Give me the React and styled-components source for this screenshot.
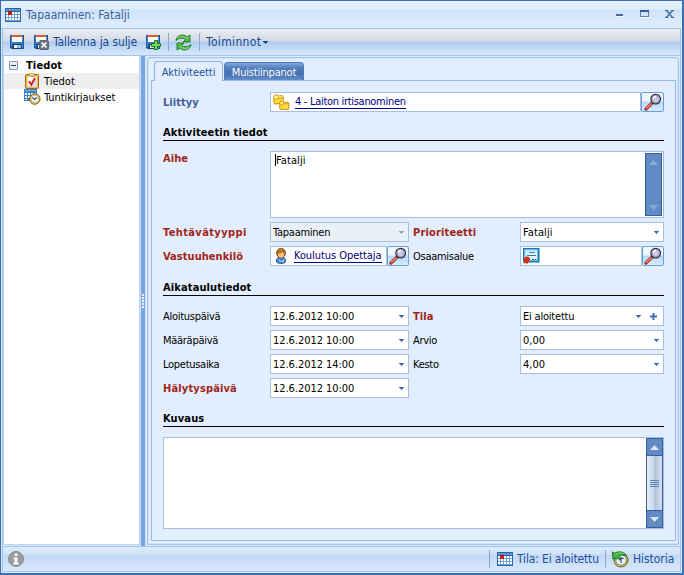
import styled, { createGlobalStyle, css } from "styled-components";

export default function App() {
  return (
    <>
      <GlobalStyle />
      <Window>
        <TitleBar>
          <CalendarIcon />
          <Title>Tapaaminen: Fatalji</Title>
          <WindowButtons />
        </TitleBar>
        <Frame>
          <Toolbar>
            <ToolItem $w={24}><SaveIcon /></ToolItem>
            <ToolItem $w={112} $gap={4}>
              <SaveIcon badge="close" />
              <Fit $ls={-0.1}>Tallenna ja sulje</Fit>
            </ToolItem>
            <ToolItem $w={23}><SaveIcon badge="plus" /></ToolItem>
            <Divider $m="0 6px 0 0" />
            <ToolItem $w={24}><RefreshIcon /></ToolItem>
            <Divider $m="0 6px 0 0" />
            <Fit $ls={0.35}>Toiminnot</Fit>
            <MenuArrow $dark />
          </Toolbar>
          <Main>
            <Sidebar>
              <TreeRow $root>
                <Toggle />
                <Strong>Tiedot</Strong>
              </TreeRow>
              <TreeRow $selected>
                <ClipboardIcon />
                <Fit>Tiedot</Fit>
              </TreeRow>
              <TreeRow>
                <TimesheetIcon />
                <Fit $ls={-0.05}>Tuntikirjaukset</Fit>
              </TreeRow>
            </Sidebar>
            <Splitter>
              {[0, 1, 2, 3, 4].map((i) => <Grip key={i} />)}
            </Splitter>
            <Content>
              <Tabs>
                <Tab $active $w={69}>Aktiviteetti</Tab>
                <Tab $w={80} $ls={-0.2}>Muistiinpanot</Tab>
              </Tabs>
              <Panel>
                <ActivityForm />
              </Panel>
            </Content>
          </Main>
          <StatusBar>
            <InfoIcon />
            <Spacer />
            <Divider $m="0 7px 0 0" />
            <StatusItem $w={108}>
              <CalendarIcon />
              <Fit $ls={-0.15}>Tila: Ei aloitettu</Fit>
            </StatusItem>
            <Divider $m="0 6px 0 0" />
            <StatusItem $w={68}>
              <HistoryIcon />
              <Fit $ls={-0.05}>Historia</Fit>
            </StatusItem>
          </StatusBar>
        </Frame>
      </Window>
    </>
  );
}

function ActivityForm() {
  return (
    <>
      <Row>
        <Label $tone="blue">Liittyy</Label>
        <Lookup>
          <Box>
            <FoldersIcon />
            <RecordLink $gap={5} $ls={-0.3}>4 - Laiton irtisanominen</RecordLink>
          </Box>
          <SearchButton width={23} />
        </Lookup>
      </Row>
      <Heading $h={29}>Aktiviteetin tiedot</Heading>
      <Row $h={67} $top={10}>
        <Label $tone="red" $align="start">Aihe</Label>
        <TextArea>
          <Subject>Fatalji</Subject>
          <ScrollBar $disabled>
            <ScrollArrow up />
            <ScrollArrow />
          </ScrollBar>
        </TextArea>
      </Row>
      <SplitRow $top={4}>
        <Label $tone="red" $ls={0.38}>Tehtävätyyppi</Label>
        <Select value="Tapaaminen" spacing={-0.25} disabled />
        <Label $tone="red" $ls={0.15}>Prioriteetti</Label>
        <Select value="Fatalji" spacing={0.1} />
      </SplitRow>
      <SplitRow $top={4}>
        <Label $tone="red">Vastuuhenkilö</Label>
        <Lookup>
          <Box>
            <PersonIcon />
            <RecordLink $gap={5} $ls={-0.06}>Koulutus Opettaja</RecordLink>
          </Box>
          <SearchButton />
        </Lookup>
        <Label>Osaamisalue</Label>
        <Lookup>
          <Box><CertificateIcon /></Box>
          <SearchButton />
        </Lookup>
      </SplitRow>
      <Heading $h={30}>Aikataulutiedot</Heading>
      <SplitRow $top={10}>
        <Label>Aloituspäivä</Label>
        <Select value="12.6.2012 10:00" spacing={-0.05} />
        <Label $tone="red">Tila</Label>
        <Select value="Ei aloitettu" spacing={-0.2} addable />
      </SplitRow>
      <SplitRow $top={4}>
        <Label>Määräpäivä</Label>
        <Select value="12.6.2012 10:00" spacing={-0.05} />
        <Label>Arvio</Label>
        <Select value="0,00" />
      </SplitRow>
      <SplitRow $top={4}>
        <Label>Lopetusaika</Label>
        <Select value="12.6.2012 14:00" spacing={-0.05} />
        <Label>Kesto</Label>
        <Select value="4,00" />
      </SplitRow>
      <SplitRow $top={4}>
        <Label $tone="red" $ls={0.15}>Hälytyspäivä</Label>
        <Select value="12.6.2012 10:00" spacing={-0.05} />
      </SplitRow>
      <Heading $h={29}>Kuvaus</Heading>
      <Description>
        <ScrollBar>
          <ScrollArrow up />
          <Thumb>
            <i /><i /><i /><i />
          </Thumb>
          <ScrollArrow />
        </ScrollBar>
      </Description>
    </>
  );
}

function Select({ value, disabled, spacing, addable }) {
  return (
    <Box $disabled={disabled}>
      <FieldText $ls={spacing}>{value}</FieldText>
      <Spacer />
      <MenuArrow $disabled={disabled} />
      {addable && (
        <PlusMark viewBox="0 0 7 7" width="7" height="7">
          <path d="M2.5 0h2v2.5H7v2H4.5V7h-2V4.5H0v-2h2.5z" fill="#3f72b8" />
        </PlusMark>
      )}
    </Box>
  );
}

function MenuArrow({ $dark, $disabled }) {
  const fill = $disabled ? "#9babc3" : $dark ? "#1e4790" : "#3f72b8";
  return (
    <ArrowMark $dark={$dark} width="5" height="3" viewBox="0 0 5 3" shapeRendering="crispEdges">
      <path d="M0 0h5v1H4v1H3v1H2V2H1V1H0z" fill={fill} />
    </ArrowMark>
  );
}

function ScrollArrow({ up }) {
  return (
    <ArrowCell>
      <svg width="9" height="5" viewBox="0 0 9 5">
        <path d={up ? "M4.5 0L9 5H0z" : "M0 0h9L4.5 5z"} fill="currentColor" />
      </svg>
    </ArrowCell>
  );
}

function SearchButton({ width = 22 }) {
  return (
    <IconButton type="button" $w={width}>
      <svg width="18" height="18" viewBox="0 0 18 18">
        <path d="M2 16L8.2 9.8" stroke="#9b3433" strokeWidth="3.2" strokeLinecap="round" />
        <path d="M2.2 15.6L7.8 10" stroke="#ff7c62" strokeWidth="1.7" />
        <path d="M7.5 10.5l1.6-1.6" stroke="#4b4656" strokeWidth="2" />
        <circle cx="11.7" cy="6.1" r="4.8" fill="#c9c9e6" stroke="#34303d" strokeWidth="1.3" />
        <circle cx="11.7" cy="6.1" r="3.7" fill="none" stroke="#9593b7" />
        <path d="M9.2 5.7c.3-1.5 1.3-2.3 2.8-2.3" stroke="#fff" strokeWidth="1.5" fill="none" />
      </svg>
    </IconButton>
  );
}

function WindowButtons() {
  return (
    <svg viewBox="0 0 60 12" width="60" height="12">
      <g shapeRendering="crispEdges">
        <path d="M0 7h7v1H0zM24 8h10v1H24z" fill="#fff" opacity=".8" />
        <path d="M0 5h7v2H0z" fill="#456b9f" />
        <path d="M24 1h9v7h-9zM25 3v4h7V3z" fill="#5d7fae" fillRule="evenodd" />
        <path d="M24 1h9v2h-9z" fill="#345b93" />
      </g>
      <path d="M50.500 8.500l6-7M50.500 1.500l6 7" stroke="#567aaa" strokeWidth="1.900" />
      <path d="M49 1.500h3M55 1.500h3M49 8.500h3M55 8.500h3" stroke="#456b9f" />
    </svg>
  );
}

function CalendarIcon() {
  return (
    <svg width="16" height="16" viewBox="0 0 16 16" shapeRendering="crispEdges">
      <path d="M0 1h16v14H0z" fill="#2866a8" />
      <path d="M1 2h14v2H1z" fill="#5795d0" />
      <path d="M1 5h14v9H1z" fill="#6fa4d6" />
      {[5, 8, 11].map((y) =>
        [1, 4, 7, 10, 13].map((x) => (
          <rect key={`${x}-${y}`} x={x} y={y} width="2" height="2" fill="#fff" />
        ))
      )}
      <path d="M3 4h4v4H3z" fill="#d51808" />
      <path d="M3 4h4v1H3z" fill="#a51208" />
    </svg>
  );
}

function SaveIcon({ badge }) {
  return (
    <svg width="16" height="16" viewBox="0 0 16 16">
      <g shapeRendering="crispEdges">
        <path d="M1 1h14v14H2v-1H1z" fill="#1f559c" />
        <path d="M2 2h1v11H2zM13 2h1v12h-1z" fill="#4384c8" />
        <path d="M3 1h10v2H3z" fill="#e0592f" />
        <path d="M3 3h10v5H3z" fill="#f7fafd" />
        <path d="M3 8h10v2H3z" fill="#3b7dc4" />
        <path d="M4 10h8v5H4z" fill="#173c70" />
        <path d="M5 11h3v3H5z" fill="#eef4fa" />
        <path d="M8 11h4v3H8z" fill="#9cb8d8" />
      </g>
      {badge === "close" && (
        <>
          <rect x="6.500" y="6.500" width="9" height="9" rx="1.500" fill="#69727e" stroke="#5b6470" />
          <path d="M8.500 8.500l5 5m0-5l-5 5" stroke="#fff" strokeWidth="1.700" />
        </>
      )}
      {badge === "plus" && (
        <path d="M9.500 6.500h3v3h3v3h-3v3h-3v-3h-3v-3h3z" fill="#76d45b" stroke="#187b1b" />
      )}
    </svg>
  );
}

function RefreshIcon() {
  return (
    <svg width="17" height="17" viewBox="0 0 17 17">
      <g fill="#52b84d" stroke="#187923" strokeWidth=".9" strokeLinejoin="round">
        <path d="M1 6.500C2 1 8-.5 12 3l3-2v7H8l2.500-2.500C8 4 4.500 3.500 1 6.500z" />
        <path d="M16 10.500C15 16 9 17.500 5 14l-3 2V9h7l-2.500 2.500c2.500 1.500 6 2 9.500-1z" />
      </g>
      <path d="M3.500 3.800C6 1.800 9 2.200 11.800 4.400L14 2.700M13.500 13.500c-2.500 1.600-5.200 1.300-8.200-1" stroke="#a4e47c" fill="none" />
    </svg>
  );
}

function ClipboardIcon() {
  return (
    <svg width="16" height="16" viewBox="0 0 16 16">
      <rect x="1.500" y="1.500" width="13" height="14" rx="1" fill="#f0b53c" stroke="#a8691a" />
      <path d="M3.500 3.500h9v10.500h-9z" fill="#fff" />
      <path d="M3.500 14l9-9v9z" fill="#d5def2" />
      <path d="M5 1h1.500L8 0l1.500 1H11v2H5z" fill="#f8e69b" stroke="#9a6a22" strokeWidth=".7" />
      <path d="M5 8.300l2.300 3.400L11 5" fill="none" stroke="#d9201c" strokeWidth="2" />
    </svg>
  );
}

function TimesheetIcon() {
  return (
    <svg width="17" height="16" viewBox="0 0 17 16">
      <path d="M0 0h13v12H0z" fill="#3983ca" />
      <path d="M1 1h11v1H1z" fill="#79b1e4" />
      <path d="M1 4h2v2H1zM4 4h2v2H4zM7 4h2v2H7zM10 4h2v2h-2zM1 7h2v2H1zM4 7h2v2H4zM1 10h2v1H1z" fill="#fff" />
      <circle cx="10.800" cy="10" r="5.300" fill="#e9bf55" stroke="#765b20" strokeWidth=".9" />
      <circle cx="10.800" cy="10" r="3.800" fill="#f1f6fa" stroke="#b99b54" strokeWidth=".6" />
      <path d="M8.300 8.500l2.500 2L13 8.500" fill="none" stroke="#355479" strokeWidth="1.200" />
    </svg>
  );
}

function FoldersIcon() {
  return (
    <svg width="17" height="16" viewBox="0 0 17 16">
      <g fill="#ffe66b" stroke="#d49b16">
        <path d="M.5 3.500l.5-2 3-1 1 1.500 4-.5 1 1v6.500l-8 1z" />
        <path d="M1.500 10l-1-4 3-.5.500-1 6.500-.5-.5 5z" fill="#ffdc43" />
        <path d="M6.500 9l1-1.500h2.500l1 1 4-.500.500 1v6l-8 .500z" />
        <path d="M7 15.500l-.5-4 2.500-.5.500-1 6.500-.500-.5 6z" fill="#ffdb3d" />
      </g>
      <path d="M2 3h2M8 9h2" stroke="#fff7b9" />
    </svg>
  );
}

function PersonIcon() {
  return (
    <svg width="16" height="16" viewBox="0 0 16 16">
      <path d="M3.500 14V12c0-2 2-3 4.500-3s4.500 1 4.500 3v2c-2 2-7 2-9 0z" fill="#3f7fcb" stroke="#244e93" strokeWidth=".8" />
      <path d="M4.500 10.500l4 2.500 3-2-1 3-4-.5z" fill="#b8dbf5" />
      <ellipse cx="8" cy="5" rx="4.500" ry="4.700" fill="#b66b17" stroke="#74410f" strokeWidth=".8" />
      <path d="M5 5.500c2 0 3.500-.6 4.500-1.800.4 1 1 1.500 1.700 1.800 0 3-1.200 4.200-3.200 4.200S5 8.500 5 5.500z" fill="#f7c47d" />
      <path d="M6 2.500c1-1 2-1.300 3-1" stroke="#e4a84c" fill="none" />
    </svg>
  );
}

function CertificateIcon() {
  return (
    <svg width="17" height="16" viewBox="0 0 17 16">
      <path d="M.75.750h15v13H.75z" fill="#dff4ff" stroke="#1977b6" strokeWidth="1.500" />
      <path d="M2 2h12.500v10.500H2z" fill="none" stroke="#68c8ec" />
      <path d="M6 4.500h6M4 7.500h9" stroke="#397cac" />
      <path d="M9 11.500h2M12 11.500h1.500" stroke="#2a4a68" />
      <circle cx="4" cy="11.500" r="3" fill="#d53112" />
      <path d="M1.500 13.500L1 15.500l2-.5 1.500 1 .5-2z" fill="#e01d10" />
    </svg>
  );
}

function HistoryIcon() {
  return (
    <svg width="17" height="17" viewBox="0 0 17 17">
      <circle cx="9" cy="9" r="7" fill="#e8bd42" stroke="#6d5723" />
      <circle cx="9" cy="9" r="5.200" fill="#edf7fb" stroke="#718d9e" />
      <path d="M7 9l3-2 1.500 1M9 8v4" stroke="#294e6e" fill="none" strokeWidth="1.200" />
      <path d="M.5.800l2.200 1.400C6.500-.2 12 .2 15 5c-3-1.500-5.500-1.300-7.500.2L9 7.500.8 8z" fill="#42b13d" stroke="#14641d" strokeWidth=".8" />
      <path d="M3 4c3-2.300 6-2.500 8.500-1.600" stroke="#8ada65" fill="none" />
    </svg>
  );
}

function InfoIcon() {
  return (
    <svg width="16" height="16" viewBox="0 0 16 16">
      <circle cx="8" cy="8" r="7.500" fill="#9b9b9b" stroke="#8c8c8c" />
      <path d="M6.500 2.500h3v2.500h-3zM5.500 6.500h4v5.500h1.500v1.500H5V12h1.500V8h-1z" fill="#fff" />
    </svg>
  );
}

const GlobalStyle = createGlobalStyle`
  * { box-sizing: border-box; }
  body {
    margin: 0;
    overflow: hidden;
    font: 11px/14px "DejaVu Sans Condensed", "DejaVu Sans", sans-serif;
    font-stretch: condensed;
    color: #000;
  }
  svg { flex: none; display: block; }
`;

const Window = styled.div`
  width: 684px;
  height: 575px;
  border: 1px solid #3c6fb1;
  border-right-width: 2px;
  border-bottom-width: 2px;
  background: #deebfb;
  display: flex;
  flex-direction: column;
  overflow: hidden;
`;

const TitleBar = styled.header`
  height: 27px;
  flex: none;
  display: flex;
  align-items: center;
  padding: 0 6px 0 4px;
  gap: 5px;
  background: linear-gradient(#e6f1fd 0, #e1eefd 8px, #cfe2f9 9px, #dfeefe 100%);
`;

const Title = styled.h1`
  flex: 1;
  margin: 0;
  font-size: 12px;
  font-weight: 400;
  letter-spacing: 0;
  color: #3d6395;
`;

const Frame = styled.div`
  flex: 1;
  min-height: 0;
  margin: 0 1px 1px;
  border: 1px solid #9fc3f0;
  display: flex;
  flex-direction: column;
`;

const Toolbar = styled.div`
  height: 26px;
  flex: none;
  display: flex;
  align-items: center;
  padding-left: 6px;
  color: #1e4790;
  font-size: 12px;
  background: linear-gradient(#eceff4 0, #d2d9e5 12px, #b0cef0 13px, #d7e7fa 100%);
`;

const ToolItem = styled.div`
  width: ${(p) => p.$w}px;
  flex: none;
  display: flex;
  align-items: center;
  gap: ${(p) => p.$gap || 0}px;
  white-space: nowrap;
`;

const Divider = styled.span`
  width: 1px;
  height: 18px;
  margin: ${(p) => p.$m};
  background: #86a9d5;
`;

const Fit = styled.span`
  white-space: nowrap;
  letter-spacing: ${(p) => p.$ls || 0}px;
`;

const FieldText = styled(Fit)`
  padding-top: 1px;
`;

const Strong = styled.b`
  font-size: 11px;
  letter-spacing: 0.12px;
`;

const ArrowMark = styled.svg`
  margin-left: ${(p) => (p.$dark ? 2 : 0)}px;
`;

const Main = styled.div`
  height: 491px;
  flex: none;
  display: flex;
  border-top: 1px solid #9fc3f0;
  background: #deebfb;
`;

const Sidebar = styled.nav`
  width: 137px;
  margin-bottom: 1px;
  border: 1px solid #b9d2f2;
  border-top: 0;
  background: #fff;
`;

const TreeRow = styled.div`
  height: 16px;
  margin-top: ${(p) => (p.$root ? 1 : 0)}px;
  display: flex;
  align-items: center;
  gap: ${(p) => (p.$root ? 8 : 4)}px;
  padding-left: ${(p) => (p.$root ? 5 : 20)}px;
  background: ${(p) => (p.$selected ? "#efefef" : "none")};
  > :last-child {
    margin-top: 1px;
    margin-left: ${(p) => (p.$root || p.$selected ? 0 : -1)}px;
  }
`;

const Toggle = styled.span`
  width: 9px;
  height: 9px;
  border: 1px solid #8496ae;
  border-radius: 1px;
  background: linear-gradient(#34465b, #34465b) center / 5px 1px no-repeat, #e8eef4;
`;

const Splitter = styled.div`
  width: 6px;
  display: flex;
  flex-direction: column;
  align-items: center;
  justify-content: center;
  gap: 1px;
  border: solid #cfe1f8;
  border-width: 0 1px;
  background: #7ba5dc;
`;

const Grip = styled.i`
  width: 2px;
  height: 2px;
  background: #eef5ff;
`;

const Content = styled.section`
  flex: 1;
  display: flex;
  flex-direction: column;
  margin: 1px;
  padding: 3px 2px 3px 3px;
  border: 1px solid #a3c4ee;
  border-radius: 3px 3px 0 0;
  background: #e2edfd;
  box-shadow: inset 0 0 0 1px #d0e2fa;
`;

const Tabs = styled.div`
  height: 19px;
  flex: none;
  display: flex;
  gap: 1px;
  padding-left: 3px;
`;

const Tab = styled.div`
  width: ${(p) => p.$w}px;
  height: 20px;
  padding-top: 4px;
  z-index: 1;
  text-align: center;
  white-space: nowrap;
  letter-spacing: ${(p) => p.$ls || -0.05}px;
  border: 1px solid #8db2e3;
  border-bottom: 0;
  border-radius: 4px 4px 0 0;
  color: #2053a0;
  background: #e2edfd;
  ${(p) =>
    !p.$active &&
    css`
      height: 18px;
      margin-top: 1px;
      padding-top: 3px;
      color: #fff;
      border-color: #4b79bc;
      background: linear-gradient(#82a9dc 0, #527fbe 5px, #456fae 11px, #648fcb 100%);
    `}
`;

const Panel = styled.div`
  flex: 1;
  padding: 11px 11px 0;
  border: 1px solid #94b9e9;
  background: #e2edfd;
`;

const Row = styled.div`
  height: ${(p) => p.$h || 20}px;
  margin-top: ${(p) => p.$top || 0}px;
  display: grid;
  grid-template-columns: 107px 394px;
`;

const SplitRow = styled(Row)`
  grid-template-columns: 107px 139px 111px 144px;
  > :nth-child(3) { padding-left: 4px; }
`;

const tones = { red: "#a12517", blue: "#435e93" };

const Label = styled.label`
  align-self: ${(p) => p.$align || "center"};
  padding-top: 1px;
  white-space: nowrap;
  color: ${(p) => tones[p.$tone] || "#000"};
  font-weight: ${(p) => (p.$tone ? 700 : 400)};
  letter-spacing: ${(p) => p.$ls ?? (p.$tone ? 0.05 : -0.28)}px;
`;

const Heading = styled.h2`
  height: ${(p) => p.$h}px;
  margin: 0;
  display: flex;
  align-items: flex-end;
  border-bottom: 1px solid #000;
  font-size: 11px;
  font-weight: 700;
  letter-spacing: 0.12px;
`;

const Lookup = styled.div`
  display: flex;
  height: 20px;
  min-width: 0;
`;

const Box = styled.div`
  flex: 1;
  height: 20px;
  min-width: 0;
  display: flex;
  align-items: center;
  padding: 0 4px 0 2px;
  border: 1px solid #a6bfde;
  background: ${(p) => (p.$disabled ? "#eaf0f9" : "#fff")};
`;

const RecordLink = styled.a`
  margin-left: ${(p) => p.$gap}px;
  padding-top: 1px;
  line-height: 12px;
  letter-spacing: ${(p) => p.$ls || 0}px;
  white-space: nowrap;
  color: #00007d;
  border-bottom: 1px solid #00007d;
`;

const IconButton = styled.button`
  flex: none;
  width: ${(p) => p.$w}px;
  height: 20px;
  display: grid;
  place-items: center;
  padding: 0;
  border: 1px solid #6c9edb;
  border-radius: 2px;
  background: linear-gradient(#eef7fe 0 45%, #b7d7f5 50%, #d3eefb);
`;

const PlusMark = styled.svg`
  margin: 0 2px 0 9px;
`;

const Spacer = styled.span`
  flex: 1;
`;

const TextArea = styled.div`
  height: 67px;
  display: flex;
  justify-content: space-between;
  padding: 1px;
  border: 1px solid #a6bfde;
  background: #fff;
`;

const Subject = styled.span`
  height: 12px;
  margin: 1px 0 0 3px;
  line-height: 13px;
  letter-spacing: 0.1px;
  border-left: 1px solid #000;
`;

const Description = styled(TextArea)`
  height: 92px;
  margin-top: 10px;
  padding: 0;
  justify-content: flex-end;
`;

const ScrollBar = styled.div`
  width: 17px;
  display: flex;
  flex-direction: column;
  justify-content: space-between;
  border: 1px solid #365f9f;
  background: #628ac4;
  color: ${(p) => (p.$disabled ? "#89aad5" : "#dce8f7")};
`;

const ArrowCell = styled.div`
  height: 16px;
  display: grid;
  place-items: center;
`;

const Thumb = styled.div`
  flex: 1;
  display: flex;
  flex-direction: column;
  align-items: center;
  justify-content: center;
  gap: 1px;
  border: solid #365f9f;
  border-width: 1px 0;
  background: linear-gradient(90deg, #e4edf8 0, #cdd9e9 45%, #b3c5dc 50%, #d3dfee);
  i {
    width: 9px;
    height: 1px;
    background: #5c82b6;
  }
`;

const StatusBar = styled.footer`
  flex: 1;
  display: flex;
  align-items: center;
  padding-left: 5px;
  border-top: 1px solid #9fc3f0;
  color: #24509b;
  font-size: 12px;
  background: linear-gradient(#dceafa 0, #d3e4f8 7px, #bfd9f6 8px, #dae9fa 100%);
`;

const StatusItem = styled.div`
  width: ${(p) => p.$w}px;
  display: flex;
  align-items: center;
  gap: 4px;
  white-space: nowrap;
`;
